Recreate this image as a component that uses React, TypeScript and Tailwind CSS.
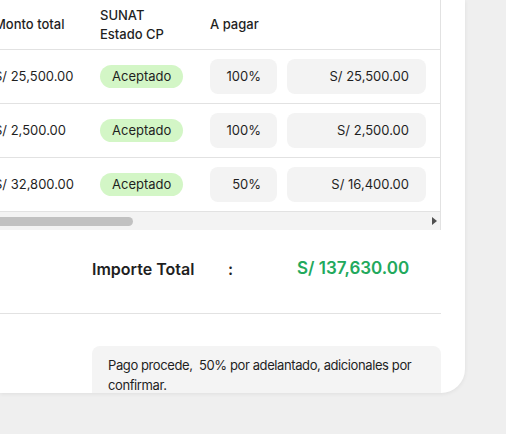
const rows = [
  { total: "S/ 25,500.00", pct: "100%", pay: "S/ 25,500.00" },
  { total: "S/ 2,500.00", pct: "100%", pay: "S/ 2,500.00" },
  { total: "S/ 32,800.00", pct: "50%", pay: "S/ 16,400.00" },
]

export default function App() {
  return (
    <div
      className="w-[506px] h-[434px] overflow-hidden bg-[#efefef] text-[#1f1f1f]"
      style={{ fontFamily: "Inter, 'Noto Sans', sans-serif" }}
    >
      <div className="w-[465px] h-[393px] overflow-hidden bg-white rounded-br-[24px] shadow-[0_1px_4px_rgba(0,0,0,0.07)]">
        {/* table */}
        <div className="w-[441px] overflow-hidden border-r border-[#e2e2e2]">
          <div className="-ml-[6px] w-[447px]">
            <div className="flex h-[50px] items-center border-b border-[#e2e2e2] text-[13px] font-medium leading-[19px]">
              <div className="w-[106px]">Monto total</div>
              <div className="w-[110px]">
                SUNAT
                <br />
                Estado CP
              </div>
              <div>A pagar</div>
            </div>
            {rows.map((r, i) => (
              <div key={i} className="flex h-[54px] items-center border-b border-[#e2e2e2] text-[13px]">
                <div className="w-[106px]">{r.total}</div>
                <div className="w-[110px]">
                  <span className="inline-flex h-[23px] items-center rounded-full bg-[#d3f6c6] px-[12px]">Aceptado</span>
                </div>
                <div className="flex h-[35px] w-[67px] items-center justify-end rounded-lg bg-[#f3f3f3] pr-[16px]">{r.pct}</div>
                <div className="ml-[10px] flex h-[35px] w-[139px] items-center justify-end rounded-lg bg-[#f3f3f3] pr-[17px]">{r.pay}</div>
              </div>
            ))}
          </div>
          {/* scrollbar */}
          <div className="flex h-[18px] items-center bg-[#f3f3f3]">
            <div className="h-[9px] w-[133px] rounded-r-full bg-[#c1c1c1]" />
            <div className="flex-1" />
            <svg width="5" height="8" viewBox="0 0 5 8" className="mr-[3px]">
              <path d="M0 0 L5 4 L0 8 Z" fill="#505050" />
            </svg>
          </div>
        </div>

        {/* total */}
        <div className="flex h-[84px] w-[441px] items-center border-b border-[#e2e2e2] pb-[6px] pl-[92px] font-semibold">
          <div className="w-[136px] text-[16px]">Importe Total</div>
          <div className="w-[69px] text-[16px]">:</div>
          <div className="text-[17px] text-[#22a95c]">S/ 137,630.00</div>
        </div>

        {/* note */}
        <div className="ml-[92px] mt-[32px] h-[80px] w-[349px] rounded-lg bg-[#f4f4f4] px-[16px] pt-[9px] text-[13px] leading-[20px] tracking-[-0.4px]">
          Pago procede,&nbsp; 50% por adelantado, adicionales por confirmar.
        </div>
      </div>
    </div>
  )
}
